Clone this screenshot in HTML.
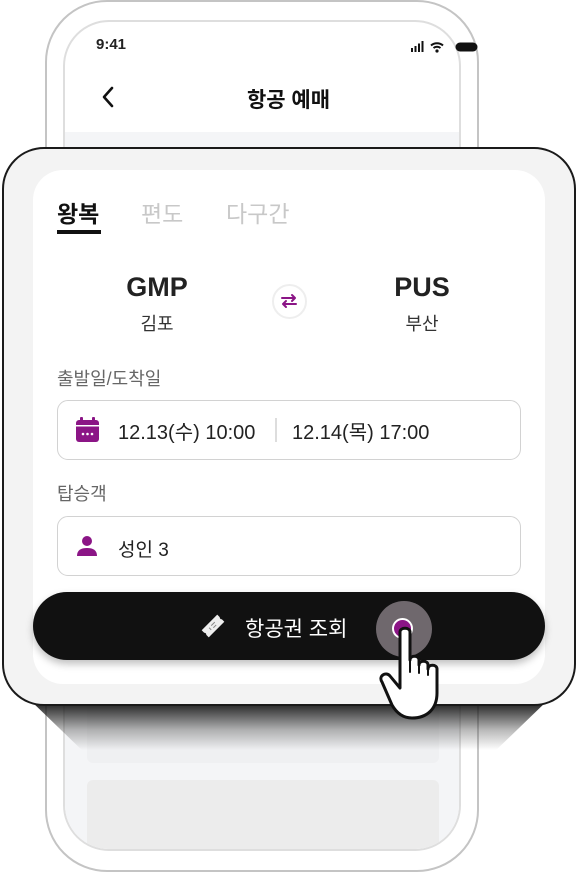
<!DOCTYPE html>
<html><head><meta charset="utf-8"><style>
*{margin:0;padding:0;box-sizing:border-box}
body{width:577px;height:872px;background:#fff;position:relative;overflow:hidden;font-family:"Liberation Sans","Noto Sans CJK KR",sans-serif;color:#222}
.abs{position:absolute}
</style></head><body>
<div class="abs" style="left:45px;top:0;width:434px;height:872px;border:2px solid #c4c4c4;border-radius:62px;background:#fff"></div>
<div class="abs" style="left:63px;top:20px;width:398px;height:831px;border:2px solid #dedede;border-radius:46px;background:#fff;overflow:hidden">
  <div class="abs" style="left:0;top:110px;width:398px;height:740px;background:#f4f5f7"></div>
  <div class="abs" style="left:22px;top:675px;width:352px;height:66px;background:#eff0f2;border-radius:6px"></div>
  <div class="abs" style="left:22px;top:758px;width:352px;height:150px;background:#ececec;border-radius:6px"></div>
</div>
<div class="abs" style="left:96px;top:36px;font-size:15px;font-weight:bold">9:41</div>
<svg class="abs" style="left:410px;top:40px" width="70" height="14" viewBox="0 0 70 14">
<rect x="1" y="8" width="2" height="4" fill="#111"/><rect x="4.5" y="6" width="2" height="6" fill="#111"/><rect x="8" y="3.5" width="2" height="8.5" fill="#111"/><rect x="11.5" y="1" width="2" height="11" fill="#111"/>
<path d="M21 5.5a9 9 0 0 1 12 0M23.5 8a5.5 5.5 0 0 1 7 0" stroke="#111" stroke-width="2" fill="none"/><circle cx="27" cy="11" r="1.6" fill="#111"/>
<rect x="45.5" y="2.5" width="22" height="9" rx="4.5" fill="#111"/>
</svg>
<svg class="abs" style="left:98px;top:85px" width="20" height="24"><path d="M14 3 6 12l8 9" stroke="#111" stroke-width="2.6" fill="none" stroke-linecap="round" stroke-linejoin="round"/></svg>
<div class="abs" style="left:0;width:577px;top:84px;text-align:center;font-size:21px;font-weight:600;color:#111">항공 예매</div>

<div class="abs" style="left:30px;top:700px;width:518px;height:50px;background:linear-gradient(#111,rgba(80,80,80,.4) 60%,rgba(255,255,255,0));clip-path:polygon(0 0,100% 0,90% 100%,10% 100%)"></div>
<div class="abs" style="left:2px;top:147px;width:574px;height:559px;border:2px solid #1a1a1a;border-radius:42px;background:#f3f3f3"></div>
<div class="abs" style="left:33px;top:170px;width:512px;height:514px;border-radius:30px;background:#fff"></div>

<div class="abs" style="left:57px;top:195px;font-size:23px;font-weight:bold;color:#111">왕복</div>
<div class="abs" style="left:57px;top:230px;width:44px;height:4px;background:#111"></div>
<div class="abs" style="left:141px;top:195px;font-size:23px;color:#c8c8c8">편도</div>
<div class="abs" style="left:226px;top:195px;font-size:23px;color:#c8c8c8">다구간</div>

<div class="abs" style="left:97px;width:120px;top:272px;text-align:center;font-size:27px;font-weight:bold;color:#222">GMP</div>
<div class="abs" style="left:97px;width:120px;top:310px;text-align:center;font-size:18px;color:#333">김포</div>
<div class="abs" style="left:362px;width:120px;top:272px;text-align:center;font-size:27px;font-weight:bold;color:#222">PUS</div>
<div class="abs" style="left:362px;width:120px;top:310px;text-align:center;font-size:18px;color:#333">부산</div>
<div class="abs" style="left:272px;top:284px;width:35px;height:35px;border:2px solid #eee;border-radius:50%"></div>
<svg class="abs" style="left:278px;top:292px" width="22" height="18"><path d="M4 6h13M14 3l3 3-3 3M18 12H5M8 9l-3 3 3 3" stroke="#8b1586" stroke-width="2" fill="none" stroke-linecap="round" stroke-linejoin="round"/></svg>

<div class="abs" style="left:57px;top:365px;font-size:18px;color:#666">출발일/도착일</div>
<div class="abs" style="left:57px;top:400px;width:464px;height:60px;border:1.5px solid #d2d2d2;border-radius:11px"></div>
<svg class="abs" style="left:75px;top:417px" width="25" height="26"><rect x="1" y="3" width="23" height="22" rx="3" fill="#8b1586"/><rect x="5" y="0" width="3" height="6" rx="1" fill="#8b1586"/><rect x="17" y="0" width="3" height="6" rx="1" fill="#8b1586"/><rect x="1" y="8" width="23" height="1.5" fill="#fff"/><circle cx="8" cy="17" r="1.3" fill="#fff"/><circle cx="12.5" cy="17" r="1.3" fill="#fff"/><circle cx="17" cy="17" r="1.3" fill="#fff"/></svg>
<div class="abs" style="left:118px;top:416px;font-size:20px;color:#222">12.13(수) 10:00</div>
<div class="abs" style="left:275px;top:418px;width:2px;height:24px;background:#ddd"></div>
<div class="abs" style="left:292px;top:416px;font-size:20px;color:#222">12.14(목) 17:00</div>

<div class="abs" style="left:57px;top:480px;font-size:18px;color:#666">탑승객</div>
<div class="abs" style="left:57px;top:516px;width:464px;height:60px;border:1.5px solid #d2d2d2;border-radius:11px"></div>
<svg class="abs" style="left:76px;top:535px" width="22" height="22"><circle cx="11" cy="6" r="5" fill="#8b1586"/><path d="M1 21c0-6 4-8 10-8s10 2 10 8z" fill="#8b1586"/></svg>
<div class="abs" style="left:118px;top:535px;font-size:19px;color:#222">성인 3</div>

<div class="abs" style="left:33px;top:592px;width:512px;height:68px;border-radius:34px;background:#111;box-shadow:0 4px 8px rgba(0,0,0,.25)"></div>
<svg class="abs" style="left:199px;top:612px" width="28" height="28" viewBox="0 0 28 28"><g transform="rotate(-45 14 14)"><path d="M3 9h22v3.5a2 2 0 0 0 0 3V19H3v-3.5a2 2 0 0 0 0-3z" fill="#eee"/><path d="M10 12.5v3M13 12.5h5M13 15.5h4" stroke="#888" stroke-width="1"/></g></svg>
<div class="abs" style="left:245px;top:613px;font-size:21px;color:#fff">항공권 조회</div>
<div class="abs" style="left:376px;top:601px;width:56px;height:56px;border-radius:50%;background:#6f686d"></div>
<div class="abs" style="left:392px;top:618px;width:21px;height:21px;border-radius:50%;background:#8b1586;border:2.5px solid #fff"></div>
<svg class="abs" style="left:372px;top:622px" width="90" height="100" viewBox="0 0 90 100">
<path d="M28 10c0-5 10-5 10 0v28c0-5 9-5 9 0v5c0-5 9-5 9 0v4c0-5 9-5 9 0v24c0 16-10 25-25 25-10 0-16-6-20-13L10 60c-4-6 4-11 8-6l10 12z" fill="#fff" stroke="#111" stroke-width="3" stroke-linejoin="round"/>
<path d="M38 38v12M47 43v8M56 47v6" stroke="#111" stroke-width="2" stroke-linecap="round"/>
</svg>
</body></html>
